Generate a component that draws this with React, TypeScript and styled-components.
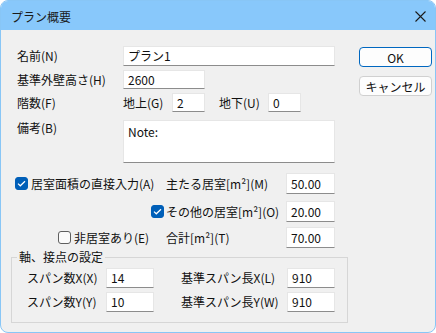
import styled, { createGlobalStyle } from "styled-components";

const GlobalStyle = createGlobalStyle`
    html, body {
        margin: 0;
        padding: 0;
        background: #ffffff;
    }
    * {
        box-sizing: border-box;
    }
`;

interface CheckProps {
    checked?: boolean;
}

function CheckBox({ checked }: CheckProps) {
    return (
        <Box $checked={checked}>
            {checked && (
                <svg width="9" height="7" viewBox="0 0 9 7">
                    <path d="M1 3.6 L3.3 5.8 L8 1.2" fill="none" stroke="#fff" strokeWidth="1.2" />
                </svg>
            )}
        </Box>
    );
}

export default function App() {
    return (
        <>
            <GlobalStyle />
            <Window>
                <TitleBar>
                    <Title>プラン概要</Title>
                    <CloseIcon width="11" height="11" viewBox="0 0 11 11">
                        <path d="M0.5 0.5 L10.5 10.5 M10.5 0.5 L0.5 10.5" stroke="#1b1b1b" strokeWidth="1.1" />
                    </CloseIcon>
                </TitleBar>
                <Body>
                    <Main>
                        <Row $mt={0} $h={20} $pl={6}>
                            <Label $w={106}>名前(N)</Label>
                            <Input $w={212}>プラン1</Input>
                        </Row>
                        <Row $mt={4} $h={19} $pl={6}>
                            <Label $w={106}>基準外壁高さ(H)</Label>
                            <Input $w={82}>2600</Input>
                        </Row>
                        <Row $mt={4} $h={19} $pl={6}>
                            <Label $w={106}>階数(F)</Label>
                            <Label $w={49}>地上(G)</Label>
                            <Input $w={33}>2</Input>
                            <Label $w={49} $ml={14}>地下(U)</Label>
                            <Input $w={33}>0</Input>
                        </Row>
                        <Row $mt={8} $h={43} $pl={6} $top>
                            <Label $w={106}>備考(B)</Label>
                            <TextArea>Note:</TextArea>
                        </Row>

                        <Row $mt={10} $h={21}>
                            <CheckArea $pl={4}>
                                <CheckBox checked />
                                <span>居室面積の直接入力(A)</span>
                            </CheckArea>
                            <Label $w={120}>主たる居室[m²](M)</Label>
                            <Input $w={49}>50.00</Input>
                        </Row>
                        <Row $mt={7} $h={21}>
                            <CheckArea $end>
                                <CheckBox checked />
                            </CheckArea>
                            <Label $w={120}>その他の居室[m²](O)</Label>
                            <Input $w={49}>20.00</Input>
                        </Row>
                        <Row $mt={5} $h={21}>
                            <CheckArea $pl={47}>
                                <CheckBox />
                                <span>非居室あり(E)</span>
                            </CheckArea>
                            <Label $w={120}>合計[m²](T)</Label>
                            <Input $w={49}>70.00</Input>
                        </Row>

                        <Group>
                            <Legend>軸、接点の設定</Legend>
                            <Row $mt={0} $h={20}>
                                <Label $w={79}>スパン数X(X)</Label>
                                <Input $w={48}>14</Input>
                                <Label $w={106} $ml={27}>基準スパン長X(L)</Label>
                                <Input $w={48}>910</Input>
                            </Row>
                            <Row $mt={0} $h={20}>
                                <Label $w={79}>スパン数Y(Y)</Label>
                                <Input $w={48}>10</Input>
                                <Label $w={106} $ml={27}>基準スパン長Y(W)</Label>
                                <Input $w={48}>910</Input>
                            </Row>
                        </Group>
                    </Main>
                    <Side>
                        <Button $primary>OK</Button>
                        <Button>キャンセル</Button>
                    </Side>
                </Body>
            </Window>
        </>
    );
}

const Window = styled.div`
    width: 436px;
    height: 333px;
    border: 1px solid #88c6f6;
    border-radius: 8px;
    overflow: hidden;
    background: #f0f0f0;
    display: flex;
    flex-direction: column;
    font-family: "Noto Sans CJK JP", "Noto Sans", sans-serif;
    font-size: 12px;
    color: #111;
`;

const TitleBar = styled.div`
    height: 29px;
    background: #88c8fb;
    display: flex;
    align-items: center;
    justify-content: space-between;
    padding: 0 9px 0 10px;
`;

const Title = styled.span`
    font-size: 12px;
    color: #1a1a1a;
    margin-top: 2px;
`;

const CloseIcon = styled.svg`
    display: block;
    margin-top: 2px;
`;

const Body = styled.div`
    flex: 1;
    display: flex;
    padding: 16px 0 0 10px;
`;

const Main = styled.div`
    width: 337px;
    display: flex;
    flex-direction: column;
`;

const Side = styled.div`
    margin-left: 11px;
    padding-top: 1px;
    display: flex;
    flex-direction: column;
    gap: 9px;
`;

const Row = styled.div<{ $mt: number; $h: number; $pl?: number; $top?: boolean }>`
    display: flex;
    align-items: ${(p) => (p.$top ? "flex-start" : "center")};
    margin-top: ${(p) => p.$mt}px;
    padding-left: ${(p) => p.$pl ?? 0}px;
    height: ${(p) => p.$h}px;
    & > * {
        height: ${(p) => (p.$top ? "auto" : `${p.$h}px`)};
    }
`;

const Label = styled.span<{ $w: number; $ml?: number }>`
    display: flex;
    align-items: center;
    width: ${(p) => p.$w}px;
    margin-left: ${(p) => p.$ml ?? 0}px;
    flex-shrink: 0;
    white-space: nowrap;
    line-height: 16px;
`;

const Input = styled.div<{ $w: number }>`
    width: ${(p) => p.$w}px;
    flex-shrink: 0;
    background: #ffffff;
    border: 1px solid #e6e6e6;
    border-bottom: 1px solid #8c8c8c;
    padding: 0 4px;
    display: flex;
    align-items: center;
    line-height: 16px;
    white-space: nowrap;
`;

const TextArea = styled.div`
    width: 212px;
    height: 43px;
    background: #ffffff;
    border: 1px solid #e6e6e6;
    border-bottom: 1px solid #8c8c8c;
    padding: 3px 4px;
    line-height: 16px;
`;

const CheckArea = styled.div<{ $pl?: number; $end?: boolean }>`
    width: 155px;
    flex-shrink: 0;
    display: flex;
    align-items: center;
    justify-content: ${(p) => (p.$end ? "flex-end" : "flex-start")};
    padding-left: ${(p) => p.$pl ?? 0}px;
    padding-right: ${(p) => (p.$end ? 2 : 0)}px;
    gap: 3px;
    white-space: nowrap;
    line-height: 16px;
`;

const Box = styled.span<{ $checked?: boolean }>`
    width: 13px;
    height: 13px;
    flex-shrink: 0;
    border-radius: 3px;
    display: flex;
    align-items: center;
    justify-content: center;
    background: ${(p) => (p.$checked ? "#005fb8" : "#fbfbfb")};
    border: 1px solid ${(p) => (p.$checked ? "#005fb8" : "#5f5f5f")};
`;

const Group = styled.fieldset`
    margin: 1px 0 0 0;
    padding: 3px 0 10px 15px;
    border: 1px solid #d6d6d6;
    border-radius: 0;
    display: flex;
    flex-direction: column;
    gap: 4px;
    min-width: 0;
`;

const Legend = styled.legend`
    margin-left: -10px;
    padding: 0 2px;
    line-height: 16px;
    font-size: 12px;
`;

const Button = styled.div<{ $primary?: boolean }>`
    width: 73px;
    height: 20px;
    border-radius: 4px;
    background: #fdfdfd;
    border: 1px solid ${(p) => (p.$primary ? "#0067c0" : "#d0d0d0")};
    display: flex;
    align-items: center;
    justify-content: center;
    font-size: 12px;
    color: #111;
`;
